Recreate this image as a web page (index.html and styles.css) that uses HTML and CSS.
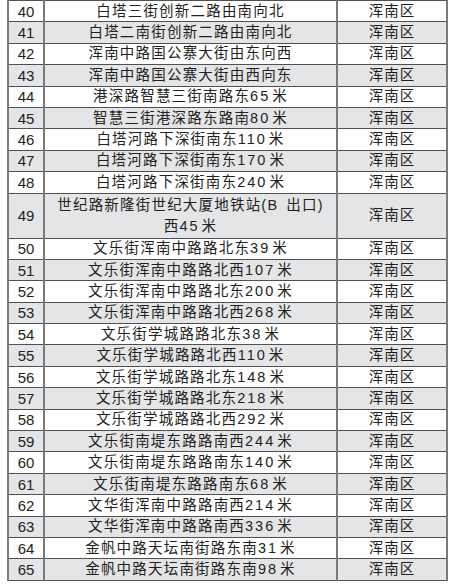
FILE: index.html
```html
<!DOCTYPE html>
<html lang="zh">
<head>
<meta charset="utf-8">
<link rel="stylesheet" href="styles.css">
</head>
<body>
<table class="tbl">
<colgroup><col class="c-num"><col class="c-loc"><col class="c-dist"></colgroup>
<tbody>
<tr><td class="num">40</td><td class="loc">白塔三街创新二路由南向北</td><td class="dist">浑南区</td></tr>
<tr class="alt"><td class="num">41</td><td class="loc">白塔二南街创新二路由南向北</td><td class="dist">浑南区</td></tr>
<tr><td class="num">42</td><td class="loc">浑南中路国公寨大街由东向西</td><td class="dist">浑南区</td></tr>
<tr class="alt"><td class="num">43</td><td class="loc">浑南中路国公寨大街由西向东</td><td class="dist">浑南区</td></tr>
<tr><td class="num">44</td><td class="loc">港深路智慧三街南路东<span class="d">65</span>米</td><td class="dist">浑南区</td></tr>
<tr class="alt"><td class="num">45</td><td class="loc">智慧三街港深路东路南<span class="d">80</span>米</td><td class="dist">浑南区</td></tr>
<tr><td class="num">46</td><td class="loc">白塔河路下深街南东<span class="d">110</span>米</td><td class="dist">浑南区</td></tr>
<tr class="alt"><td class="num">47</td><td class="loc">白塔河路下深街南东<span class="d">170</span>米</td><td class="dist">浑南区</td></tr>
<tr><td class="num">48</td><td class="loc">白塔河路下深街南东<span class="d">240</span>米</td><td class="dist">浑南区</td></tr>
<tr class="alt tall"><td class="num">49</td><td class="loc two">世纪路新隆街世纪大厦地铁站(<span class="d">B</span> 出口)<br>西<span class="d">45</span>米</td><td class="dist">浑南区</td></tr>
<tr><td class="num">50</td><td class="loc">文乐街浑南中路路北东<span class="d">39</span>米</td><td class="dist">浑南区</td></tr>
<tr class="alt"><td class="num">51</td><td class="loc">文乐街浑南中路路北西<span class="d">107</span>米</td><td class="dist">浑南区</td></tr>
<tr><td class="num">52</td><td class="loc">文乐街浑南中路路北东<span class="d">200</span>米</td><td class="dist">浑南区</td></tr>
<tr class="alt"><td class="num">53</td><td class="loc">文乐街浑南中路路北西<span class="d">268</span>米</td><td class="dist">浑南区</td></tr>
<tr><td class="num">54</td><td class="loc">文乐街学城路路北东<span class="d">38</span>米</td><td class="dist">浑南区</td></tr>
<tr class="alt"><td class="num">55</td><td class="loc">文乐街学城路路北西<span class="d">110</span>米</td><td class="dist">浑南区</td></tr>
<tr><td class="num">56</td><td class="loc">文乐街学城路路北东<span class="d">148</span>米</td><td class="dist">浑南区</td></tr>
<tr class="alt"><td class="num">57</td><td class="loc">文乐街学城路路北东<span class="d">218</span>米</td><td class="dist">浑南区</td></tr>
<tr><td class="num">58</td><td class="loc">文乐街学城路路北西<span class="d">292</span>米</td><td class="dist">浑南区</td></tr>
<tr class="alt"><td class="num">59</td><td class="loc">文乐街南堤东路路南西<span class="d">244</span>米</td><td class="dist">浑南区</td></tr>
<tr><td class="num">60</td><td class="loc">文乐街南堤东路路南东<span class="d">140</span>米</td><td class="dist">浑南区</td></tr>
<tr class="alt"><td class="num">61</td><td class="loc">文乐街南堤东路路南东<span class="d">68</span>米</td><td class="dist">浑南区</td></tr>
<tr><td class="num">62</td><td class="loc">文华街浑南中路路南西<span class="d">214</span>米</td><td class="dist">浑南区</td></tr>
<tr class="alt"><td class="num">63</td><td class="loc">文华街浑南中路路南西<span class="d">336</span>米</td><td class="dist">浑南区</td></tr>
<tr><td class="num">64</td><td class="loc">金帆中路天坛南街路东南<span class="d">31</span>米</td><td class="dist">浑南区</td></tr>
<tr class="alt"><td class="num">65</td><td class="loc">金帆中路天坛南街路东南<span class="d">98</span>米</td><td class="dist">浑南区</td></tr>
</tbody>
</table>
</body>
</html>
```
FILE: styles.css
```css
html, body {
  margin: 0;
  padding: 0;
  background: #ffffff;
}
body {
  padding: 0 0 0 7px;
  font-family: "Liberation Sans", "Noto Sans CJK SC", sans-serif;
  color: #231f20;
}
.tbl {
  border-collapse: collapse;
  width: 439px;
  table-layout: fixed;
}
.c-num { width: 36px; }
.c-loc { width: 293px; }
.c-dist { width: 110px; }
.tbl tr {
  height: 21.4px;
}
.tbl tr.tall {
  height: 45px;
}
.tbl td {
  padding: 0;
  text-align: center;
  vertical-align: middle;
  border-top: 1px solid #505050;
  border-bottom: 1px solid #505050;
  border-left: 2px solid #7a7a7a;
  border-right: 2px solid #7a7a7a;
  white-space: nowrap;
  line-height: 19px;
}
.tbl tr.alt td {
  background: #e4e5e7;
}
.num {
  font-size: 15px;
  letter-spacing: 0;
}
.loc {
  font-size: 14.5px;
  letter-spacing: 1.2px;
}
.loc .d {
  letter-spacing: 2px;
  margin-right: 2px;
}
.loc.two {
  line-height: 21px;
}
.dist {
  font-size: 14.5px;
  letter-spacing: 1px;
}
```
